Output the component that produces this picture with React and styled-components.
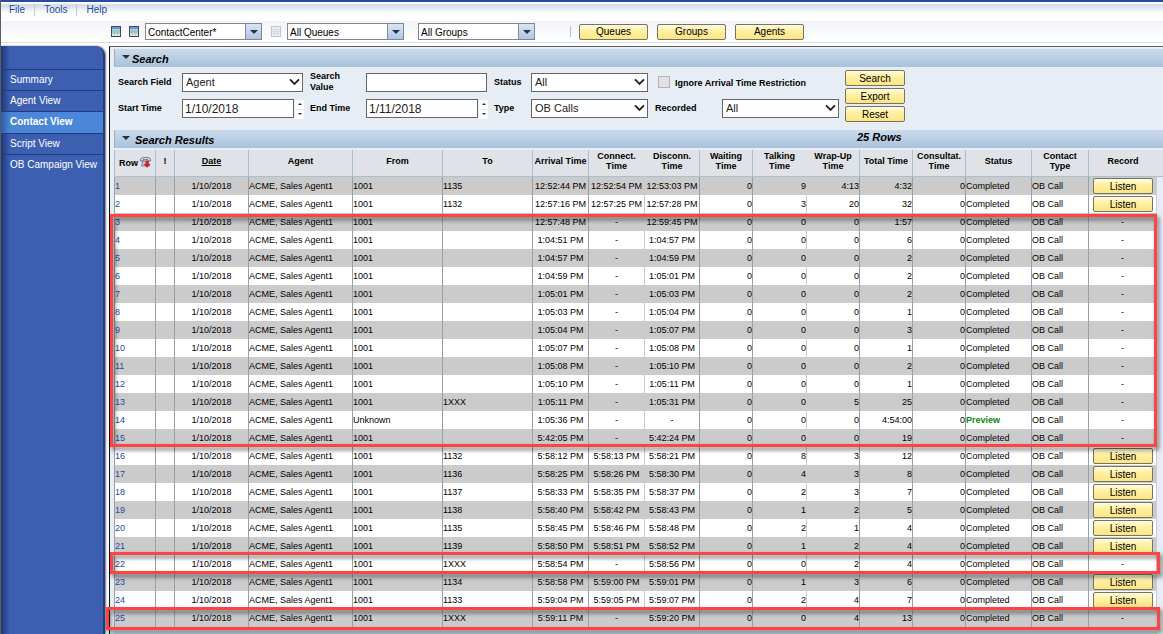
import React from "react";
import styled, { createGlobalStyle, css } from "styled-components";

const GlobalStyle = createGlobalStyle`
	* {
		box-sizing: border-box;
	}
	body {
		margin: 0;
		background: #fff;
		color: #000;
		font-family: "Liberation Sans", Arial, sans-serif;
		font-size: 10px;
		overflow: hidden;
	}
	button, input, select {
		font-family: inherit;
		color: inherit;
		margin: 0;
	}
`;

const Page = styled.div`
	height: 100vh;
	display: flex;
	flex-direction: column;
	border-left: 1px solid #5d5d5d;
	overflow: hidden;
`;

const MenuBar = styled.nav`
	height: 21px;
	flex: none;
	display: flex;
	align-items: flex-start;
	border-top: 2px solid #2a4b9b;
	background: linear-gradient(#fff 0, #fff 1px, #cfd9e8 3px, #fff 11px);
`;

const MenuLink = styled.a`
	height: 12px;
	margin-top: 2px;
	padding: 0 9px 0 8px;
	line-height: 12px;
	color: #1c4aa3;
	text-decoration: none;

	& + & {
		border-left: 1px solid #c3c9d3;
		padding-left: 9px;
	}
`;

const Toolbar = styled.div`
	height: 22px;
	flex: none;
	display: flex;
	align-items: center;
	padding-left: 110px;
	border-bottom: 1px solid #d9dce2;
	background: linear-gradient(#f1f4f9, #fff);
`;

const IconButton = styled.button`
	display: flex;
	padding: 0;
	margin-right: ${({ $gap }) => $gap || 6}px;
	border: 0;
	background: none;
	opacity: ${({ disabled }) => (disabled ? 0.6 : 1)};
`;

const ComboWrapper = styled.div`
	position: relative;
	width: 117px;
	height: 17px;
	margin-right: ${({ $gap }) => $gap}px;
`;

const Combo = styled.select`
	width: 100%;
	height: 100%;
	appearance: none;
	border: 1px solid #868686;
	border-radius: 0;
	padding: 1px 18px 0 2px;
	background: #fff;
	font-size: 10px;
`;

const ComboArrow = styled.span`
	position: absolute;
	top: 1px;
	right: 1px;
	bottom: 1px;
	width: 16px;
	display: flex;
	align-items: center;
	justify-content: center;
	border-left: 1px solid #7f8ba0;
	background: linear-gradient(#d8e5f6, #aec5e6);
	pointer-events: none;
`;

const Separator = styled.span`
	width: 1px;
	height: 11px;
	margin-right: 8px;
	background: #b9bfca;
`;

const Button = styled.button`
	width: ${({ $wide }) => ($wide ? 69 : 60)}px;
	height: 16px;
	padding: 0;
	border: 1px solid #77735f;
	border-radius: 2px;
	background: linear-gradient(#fffbe0, #ffef9f 45%, #fbe585);
	font-size: 10px;
	line-height: 13px;
	cursor: pointer;
`;

const ToolButtons = styled.div`
	display: flex;
	gap: 9px;
`;

const Body = styled.div`
	flex: 1;
	min-height: 0;
	display: flex;
	padding-top: 3px;
`;

const Sidebar = styled.nav`
	width: 104px;
	flex: none;
	padding-top: 23px;
	margin-right: 4px;
	border-right: 2px solid #26397a;
	border-radius: 0 9px 0 0;
	background: linear-gradient(90deg, #1f3779, #3c5fb1 9px);
	box-shadow: 1px 0 2px #777;
`;

const SideLink = styled.a`
	display: block;
	height: ${({ $active }) => ($active ? 22 : 21)}px;
	padding-left: 9px;
	border-top: 1px solid #20397f;
	line-height: 20px;
	white-space: nowrap;
	color: #fff;
	text-decoration: none;

	${({ $active }) =>
		$active &&
		css`
			font-weight: bold;
			background: linear-gradient(90deg, #2c5ca8, #4b86d9 9px);
		`}
`;

const Main = styled.main`
	flex: 1;
	min-width: 0;
	padding: 2px 0 0 4px;
	border-top: 1px solid #5f6368;
	border-left: 1px solid #111;
	background: #e6edf4;
`;

const SectionHeader = styled.div`
	height: 18px;
	display: grid;
	grid-template-columns: 742px 1fr;
	align-items: start;
	border-left: 1px solid #a3adb8;
	background: linear-gradient(#cbdbec, #a9c1db);
	font-size: 11px;
	font-style: italic;
	font-weight: bold;
	line-height: 14px;
`;

const SectionTitle = styled.h2`
	margin: 0;
	padding: 3px 0 0 7px;
	display: flex;
	gap: ${({ $gap }) => $gap}px;
	font-size: 11px;

	svg {
		margin-top: 3px;
	}
`;

const SearchForm = styled.form`
	height: 63px;
	display: flex;
	padding: 2px 0 0 4px;
`;

const Fields = styled.div`
	display: grid;
	grid-template-columns: 64px 128px 56px 128px 37px 124px 67px 123px;
	grid-template-rows: 26px 26px;
	align-items: center;
	height: 52px;
`;

const Label = styled.label`
	font-size: 9px;
	font-weight: bold;
	line-height: 11px;
`;

const TextInput = styled.input`
	width: ${({ $date }) => ($date ? 112 : 121)}px;
	height: 19px;
	padding: 1px 2px 0;
	border: 1px solid #666;
	color: #222;
	font-size: 12px;
`;

const DateField = styled.div`
	display: flex;
	align-items: center;
	gap: 1px;
`;

const Spinner = styled.div`
	display: flex;
	flex-direction: column;
	gap: 1px;
	margin-top: 2px;

	button {
		width: 9px;
		height: 9px;
		padding: 0;
		border: 0;
		display: flex;
		align-items: center;
		justify-content: center;
		background: #fff;
	}
`;

const SelectWrapper = styled.div`
	position: relative;
	width: ${({ $wide }) => ($wide ? 121 : 117)}px;
	height: 19px;

	svg {
		position: absolute;
		right: 3px;
		top: 5px;
		pointer-events: none;
	}
`;

const Select = styled.select`
	width: 100%;
	height: 100%;
	appearance: none;
	padding: 0 16px 1px 3px;
	border: 1px solid #666;
	border-radius: 0;
	background: #fff;
	color: #222;
	font-size: 11px;
`;

const CheckField = styled.div`
	grid-column: span 2;
	display: flex;
	align-items: center;
	gap: 5px;
	padding-left: 3px;
	white-space: nowrap;

	label {
		padding-top: 3px;
	}
`;

const CheckBox = styled.input`
	appearance: none;
	width: 12px;
	height: 12px;
	margin: 0;
	border: 1px solid #b4b4b4;
	background: #e2e2e2;
`;

const FormButtons = styled.div`
	display: flex;
	flex-direction: column;
	gap: 2px;
	padding-top: 1px;
`;

const Results = styled.div`
	position: relative;
	margin-top: 2px;
`;

const Table = styled.table`
	width: 100%;
	table-layout: fixed;
	border-collapse: separate;
	border-spacing: 0;
	font-size: 9px;
`;

const Th = styled.th`
	height: 27px;
	padding: 0 0 4px;
	border-right: 1px solid ${({ $soft }) => ($soft ? "#dfe2e7" : "#a6bfd0")};
	border-bottom: 1px solid #a9c0d0;
	background: #dfe2e7;
	line-height: 10px;
	white-space: nowrap;
	text-decoration: ${({ $sorted }) => ($sorted ? "underline" : "none")};

	&:first-child {
		border-left: 1px solid #a6bfd0;
	}
	&:nth-last-child(-n + 2) {
		border-right: 0;
	}
`;

const RowHead = styled.span`
	display: flex;
	align-items: center;
	justify-content: center;
	gap: 2px;
	padding-top: 3px;
`;

const Td = styled.td`
	height: 18px;
	padding: 0;
	border-right: 1px solid ${({ $soft }) => ($soft ? "#cbcbcb" : "#98a1a8")};
	line-height: 16px;
	white-space: nowrap;
	text-align: ${({ $align }) => $align || "left"};

	&:first-child {
		border-left: 1px solid #98a1a8;
	}
	&:nth-last-child(2) {
		border-right-color: #ccc;
	}
	&:last-child {
		border: 0;
		background: #e6edf4;
	}
`;

const Row = styled.tr`
	background: #fff;

	&:nth-child(odd) {
		background: #cbcbcb;
	}
`;

const FootCell = styled.td`
	height: 18px;
	padding: 0;
	background: #d6dade;
`;

const RowLink = styled.a`
	color: #1c4aa3;
	text-decoration: none;
`;

const Status = styled.span`
	color: ${({ $preview }) => ($preview ? "#0a8a0a" : "inherit")};
	font-weight: ${({ $preview }) => ($preview ? "bold" : "normal")};
`;

const ListenCell = styled.span`
	display: flex;
	justify-content: flex-end;
	padding-right: 3px;
`;

const Highlight = styled.div`
	position: absolute;
	left: ${({ $left }) => $left}px;
	right: ${({ $right }) => $right}px;
	border: 3px solid #fd4444;
	filter: drop-shadow(2px 3px 2px rgba(0, 0, 0, 0.55));
	pointer-events: none;
`;

const HEAD_HEIGHT = 27;
const ROW_HEIGHT = 18;

const COLUMNS = [
	{ label: "Row", width: 42 },
	{ label: "!", width: 19, align: "center" },
	{ label: "Date", width: 74, align: "center", sorted: true },
	{ label: "Agent", width: 104 },
	{ label: "From", width: 90 },
	{ label: "To", width: 90 },
	{ label: "Arrival Time", width: 56, align: "center" },
	{ label: "Connect.\nTime", width: 56, align: "center", soft: true },
	{ label: "Disconn.\nTime", width: 55, align: "center" },
	{ label: "Waiting\nTime", width: 53, align: "right" },
	{ label: "Talking\nTime", width: 54, align: "right", soft: true },
	{ label: "Wrap-Up\nTime", width: 53, align: "right" },
	{ label: "Total Time", width: 53, align: "right" },
	{ label: "Consultat.\nTime", width: 53, align: "right" },
	{ label: "Status", width: 66 },
	{ label: "Contact\nType", width: 57 },
	{ label: "Record", width: 68, align: "center" },
	{ label: "", width: 6 },
];

// from, to, arrival, connect, disconnect, waiting, talking, wrap-up, total
const CALLS = [
	["1001", "1135", "12:52:44 PM", "12:52:54 PM", "12:53:03 PM", "0", "9", "4:13", "4:32"],
	["1001", "1132", "12:57:16 PM", "12:57:25 PM", "12:57:28 PM", "0", "3", "20", "32"],
	["1001", "", "12:57:48 PM", "-", "12:59:45 PM", "0", "0", "0", "1:57"],
	["1001", "", "1:04:51 PM", "-", "1:04:57 PM", "0", "0", "0", "6"],
	["1001", "", "1:04:57 PM", "-", "1:04:59 PM", "0", "0", "0", "2"],
	["1001", "", "1:04:59 PM", "-", "1:05:01 PM", "0", "0", "0", "2"],
	["1001", "", "1:05:01 PM", "-", "1:05:03 PM", "0", "0", "0", "2"],
	["1001", "", "1:05:03 PM", "-", "1:05:04 PM", "0", "0", "0", "1"],
	["1001", "", "1:05:04 PM", "-", "1:05:07 PM", "0", "0", "0", "3"],
	["1001", "", "1:05:07 PM", "-", "1:05:08 PM", "0", "0", "0", "1"],
	["1001", "", "1:05:08 PM", "-", "1:05:10 PM", "0", "0", "0", "2"],
	["1001", "", "1:05:10 PM", "-", "1:05:11 PM", "0", "0", "0", "1"],
	["1001", "1XXX", "1:05:11 PM", "-", "1:05:31 PM", "0", "0", "5", "25"],
	["Unknown", "", "1:05:36 PM", "-", "-", "0", "0", "0", "4:54:00"],
	["1001", "", "5:42:05 PM", "-", "5:42:24 PM", "0", "0", "0", "19"],
	["1001", "1132", "5:58:12 PM", "5:58:13 PM", "5:58:21 PM", "0", "8", "3", "12"],
	["1001", "1136", "5:58:25 PM", "5:58:26 PM", "5:58:30 PM", "0", "4", "3", "8"],
	["1001", "1137", "5:58:33 PM", "5:58:35 PM", "5:58:37 PM", "0", "2", "3", "7"],
	["1001", "1138", "5:58:40 PM", "5:58:42 PM", "5:58:43 PM", "0", "1", "2", "5"],
	["1001", "1135", "5:58:45 PM", "5:58:46 PM", "5:58:48 PM", "0", "2", "1", "4"],
	["1001", "1139", "5:58:50 PM", "5:58:51 PM", "5:58:52 PM", "0", "1", "2", "4"],
	["1001", "1XXX", "5:58:54 PM", "-", "5:58:56 PM", "0", "0", "2", "4"],
	["1001", "1134", "5:58:58 PM", "5:59:00 PM", "5:59:01 PM", "0", "1", "3", "6"],
	["1001", "1133", "5:59:04 PM", "5:59:05 PM", "5:59:07 PM", "0", "2", "4", "7"],
	["1001", "1XXX", "5:59:11 PM", "-", "5:59:20 PM", "0", "0", "4", "13"],
];

const HIGHLIGHTS = [
	{ first: 3, last: 15, left: -4, right: 6, above: -1, below: 0 },
	{ first: 22, last: 22, left: -4, right: 3, above: 3, below: 1 },
	{ first: 25, last: 25, left: -8, right: 3, above: 2, below: 3 },
];

const VIEWS = ["Summary", "Agent View", "Contact View", "Script View", "OB Campaign View"];

const Triangle = ({ size = 8, up }) => (
	<svg width={size} height={size / 2} viewBox="0 0 8 4" aria-hidden="true">
		<path d={up ? "M0 4L4 0L8 4Z" : "M0 0H8L4 4Z"} fill="#2a3040" />
	</svg>
);

const Chevron = () => (
	<svg width="11" height="8" viewBox="0 0 11 8" aria-hidden="true">
		<path d="M1 1.3L5.5 5.8L10 1.3" fill="none" stroke="#222" strokeWidth="1.9" />
	</svg>
);

const GridIcon = ({ faded }) => (
	<svg width="10" height="11" viewBox="0 0 10 11" aria-hidden="true">
		<rect x=".5" y=".5" width="9" height="10" fill="#e4e9ef" stroke={faded ? "#9aa0b0" : "#40465c"} />
		{!faded && (
			<>
				<path d="M1 1H9V3H1Z" fill="#6c93e6" />
				<path d="M1 4H9V7H1Z" fill="#8fdcb0" />
			</>
		)}
		<path d="M1 3.5H9M1 5.5H9M1 7.5H9M3.5 3V10M6.5 3V10" stroke="#a9b3c4" strokeWidth=".6" />
	</svg>
);

const PhoneIcon = () => (
	<svg width="11" height="11" viewBox="0 0 11 11" aria-hidden="true">
		<path d="M.5 4V2.5Q1 .7 4 .6H8Q10.3.8 10.5 2.6V4H8V2.7H3V4Z" fill="#dfe4ef" stroke="#4b5673" strokeWidth=".8" />
		<path d="M3 4H8L9.5 9H1.5Z" fill="#c3cada" stroke="#59637e" strokeWidth=".7" />
		<path d="M5.5 4H8.5V7H10.6L7 10.8L3.4 7H5.5Z" fill="#d41c24" />
	</svg>
);

const ComboBox = ({ label, value, gap }) => (
	<ComboWrapper $gap={gap}>
		<Combo aria-label={label}>
			<option>{value}</option>
		</Combo>
		<ComboArrow>
			<Triangle />
		</ComboArrow>
	</ComboWrapper>
);

const SelectField = ({ id, label, value, wide }) => (
	<>
		<Label htmlFor={id}>{label}</Label>
		<SelectWrapper $wide={wide}>
			<Select id={id}>
				<option>{value}</option>
			</Select>
			<Chevron />
		</SelectWrapper>
	</>
);

const DateInput = ({ id, label, value }) => (
	<>
		<Label htmlFor={id}>{label}</Label>
		<DateField>
			<TextInput id={id} $date defaultValue={value} />
			<Spinner>
				<button type="button" aria-label={`${label} up`}>
					<Triangle size={4} up />
				</button>
				<button type="button" aria-label={`${label} down`}>
					<Triangle size={4} />
				</button>
			</Spinner>
		</DateField>
	</>
);

const SearchPanel = () => (
	<SearchForm onSubmit={(e) => e.preventDefault()}>
		<Fields>
			<SelectField id="field" label="Search Field" value="Agent" wide />
			<Label htmlFor="value">
				Search
				<br />
				Value
			</Label>
			<TextInput id="value" />
			<SelectField id="status" label="Status" value="All" />
			<CheckField>
				<CheckBox type="checkbox" id="ignore" disabled />
				<Label htmlFor="ignore">Ignore Arrival Time Restriction</Label>
			</CheckField>
			<DateInput id="start" label="Start Time" value="1/10/2018" />
			<DateInput id="end" label="End Time" value="1/11/2018" />
			<SelectField id="type" label="Type" value="OB Calls" />
			<SelectField id="recorded" label="Recorded" value="All" />
		</Fields>
		<FormButtons>
			<Button type="submit">Search</Button>
			<Button type="button">Export</Button>
			<Button type="reset">Reset</Button>
		</FormButtons>
	</SearchForm>
);

const CallRow = ({ index, call }) => {
	const [from, ...rest] = call;
	const preview = from === "Unknown";
	const cells = [
		<RowLink href="#">{index + 1}</RowLink>,
		"",
		"1/10/2018",
		"ACME, Sales Agent1",
		from,
		...rest,
		"0",
		<Status $preview={preview}>{preview ? "Preview" : "Completed"}</Status>,
		"OB Call",
		call[3] === "-" ? (
			"-"
		) : (
			<ListenCell>
				<Button type="button">Listen</Button>
			</ListenCell>
		),
		"",
	];

	return (
		<Row>
			{cells.map((cell, i) => (
				<Td key={i} $align={COLUMNS[i].align} $soft={COLUMNS[i].soft}>
					{cell}
				</Td>
			))}
		</Row>
	);
};

const ResultsTable = () => (
	<Results>
		<Table>
			<colgroup>
				{COLUMNS.map(({ label, width }) => (
					<col key={label} style={{ width }} />
				))}
			</colgroup>
			<thead>
				<tr>
					{COLUMNS.map(({ label, soft, sorted }) => (
						<Th key={label} $soft={soft} $sorted={sorted}>
							{label === "Row" ? (
								<RowHead>
									Row
									<PhoneIcon />
								</RowHead>
							) : (
								label.split("\n").map((line) => <div key={line}>{line}</div>)
							)}
						</Th>
					))}
				</tr>
			</thead>
			<tbody>
				{CALLS.map((call, i) => (
					<CallRow key={i} index={i} call={call} />
				))}
			</tbody>
			<tfoot>
				<tr>
					<FootCell colSpan={COLUMNS.length - 1} />
				</tr>
			</tfoot>
		</Table>
		{HIGHLIGHTS.map(({ first, last, left, right, above, below }) => (
			<Highlight
				key={first}
				$left={left}
				$right={right}
				style={{
					top: HEAD_HEIGHT + (first - 1) * ROW_HEIGHT - above,
					height: (last - first + 1) * ROW_HEIGHT + above + below,
				}}
			/>
		))}
	</Results>
);

const App = () => (
	<Page>
		<GlobalStyle />
		<MenuBar>
			<MenuLink href="#">File</MenuLink>
			<MenuLink href="#">Tools</MenuLink>
			<MenuLink href="#">Help</MenuLink>
		</MenuBar>
		<Toolbar>
			<IconButton aria-label="Open grid" $gap={8}>
				<GridIcon />
			</IconButton>
			<IconButton aria-label="Grid options">
				<GridIcon />
			</IconButton>
			<ComboBox label="Center" value="ContactCenter*" gap={9} />
			<IconButton aria-label="Queue grid" disabled>
				<GridIcon faded />
			</IconButton>
			<ComboBox label="Queues" value="All Queues" gap={14} />
			<ComboBox label="Groups" value="All Groups" gap={35} />
			<Separator />
			<ToolButtons>
				<Button $wide>Queues</Button>
				<Button $wide>Groups</Button>
				<Button $wide>Agents</Button>
			</ToolButtons>
		</Toolbar>
		<Body>
			<Sidebar>
				{VIEWS.map((view) => (
					<SideLink key={view} href="#" $active={view === "Contact View"}>
						{view}
					</SideLink>
				))}
			</Sidebar>
			<Main>
				<SectionHeader>
					<SectionTitle $gap={2}>
						<Triangle size={8} />
						Search
					</SectionTitle>
				</SectionHeader>
				<SearchPanel />
				<SectionHeader>
					<SectionTitle $gap={5}>
						<Triangle size={8} />
						Search Results
					</SectionTitle>
					<span>25 Rows</span>
				</SectionHeader>
				<ResultsTable />
			</Main>
		</Body>
	</Page>
);

export default App;
